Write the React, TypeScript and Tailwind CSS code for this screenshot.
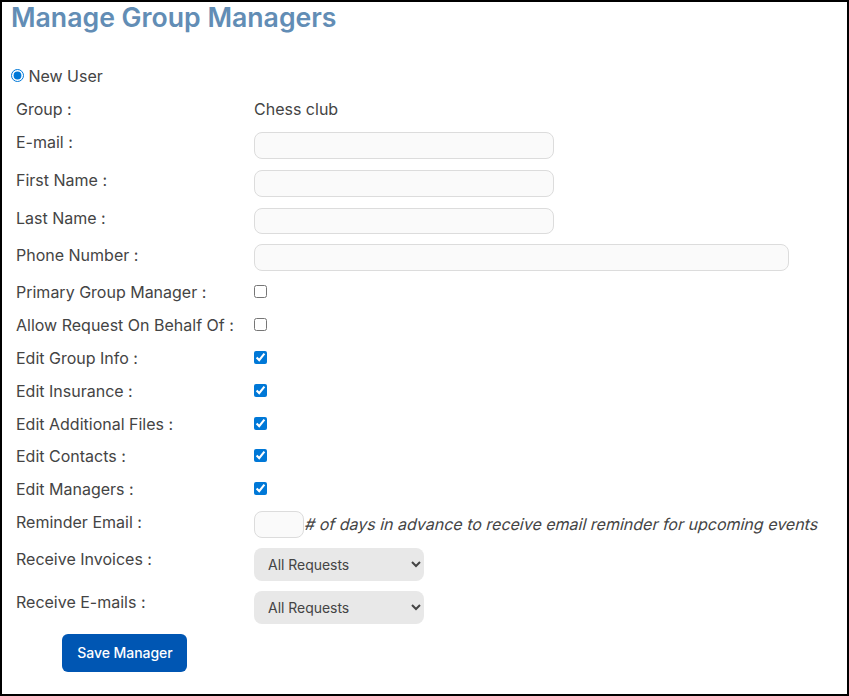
import { useState } from "react";

const textFields = [
  { name: "email", label: "E-mail :", row: "h-[38px]", size: "mt-[2px] h-[27px] w-[300px]" },
  { name: "firstName", label: "First Name :", row: "h-[38px]", size: "mt-[2px] h-[27px] w-[300px]" },
  { name: "lastName", label: "Last Name :", row: "h-[37px]", size: "mt-[2px] h-[26px] w-[300px]" },
  { name: "phone", label: "Phone Number :", row: "h-[37px]", size: "mt-px h-[27px] w-[535px]" },
];

const permissions = [
  { name: "primary", label: "Primary Group Manager :", row: "h-[33px]" },
  { name: "behalf", label: "Allow Request On Behalf Of :", row: "h-[33px]" },
  { name: "groupInfo", label: "Edit Group Info :", row: "h-[33px]" },
  { name: "insurance", label: "Edit Insurance :", row: "h-[33px]" },
  { name: "files", label: "Edit Additional Files :", row: "h-[32px]" },
  { name: "contacts", label: "Edit Contacts :", row: "h-[33px]" },
  { name: "managers", label: "Edit Managers :", row: "h-[33px]" },
];

const labelStyle = "w-[238px] shrink-0 leading-6";
const inputStyle = "rounded-lg border border-[#dcdcdc] bg-[#fafafa] px-2 focus:outline-none";
const selectStyle = "mt-px h-[33px] w-[170px] rounded-lg bg-[#e8e8e8] pl-[10px] text-sm tracking-[-0.03px]";

export default function App() {
  const [info, setInfo] = useState<Record<string, string>>({});
  const [checked, setChecked] = useState<Record<string, boolean>>({
    groupInfo: true,
    insurance: true,
    files: true,
    contacts: true,
    managers: true,
  });

  const handleInput = (
    e: React.ChangeEvent<HTMLInputElement> | React.ChangeEvent<HTMLSelectElement>
  ) => {
    const { name, value } = e.target;
    setInfo({ ...info, [name]: value });
  };

  const handleCheck = (e: React.ChangeEvent<HTMLInputElement>) => {
    setChecked({ ...checked, [e.target.name]: e.target.checked });
  };

  return (
    <div className="h-[696px] w-[849px] overflow-hidden border-2 border-black bg-white pl-[9px] font-['Inter',sans-serif] text-base text-[#444444]">
      <h1 className="h-[62px] text-[26.65px] leading-[30px] font-semibold text-[#628db5]">
        Manage Group Managers
      </h1>
      <label className="flex h-[31px] items-start">
        <input
          type="radio"
          defaultChecked
          className="mt-[5px] mr-[4.4px] h-[13px] w-[13px] accent-[#0078d7]"
        />
        <span className="leading-6">New User</span>
      </label>
      <div className="pl-[5px]">
        <div className="flex h-[35px] items-start pt-[2px]">
          <p className={labelStyle}>Group :</p>
          <p className="leading-6">Chess club</p>
        </div>
        {textFields.map((item) => (
          <div key={item.name} className={`flex items-start ${item.row}`}>
            <label className={labelStyle}>{item.label}</label>
            <input
              className={`${inputStyle} ${item.size}`}
              name={item.name}
              value={info[item.name] ?? ""}
              onChange={handleInput}
              type="text"
            />
          </div>
        ))}
        {permissions.map((item) => (
          <div key={item.name} className={`flex items-start ${item.row}`}>
            <label className={labelStyle}>{item.label}</label>
            <input
              className="mt-[5px] h-[13px] w-[13px] accent-[#0078d7]"
              name={item.name}
              checked={!!checked[item.name]}
              onChange={handleCheck}
              type="checkbox"
            />
          </div>
        ))}
        <div className="flex h-[37px] items-start">
          <label className={labelStyle}>Reminder Email :</label>
          <input
            className={`mt-px h-[27px] w-[50px] ${inputStyle}`}
            name="days"
            value={info.days ?? ""}
            onChange={handleInput}
            type="text"
          />
          <span className="mt-[2px] origin-[0_75%] -skew-x-[14deg] leading-6 whitespace-nowrap">
            # of days in advance to receive email reminder for upcoming events
          </span>
        </div>
        <div className="flex h-[43px] items-start">
          <label className={labelStyle}>Receive Invoices :</label>
          <select
            className={selectStyle}
            name="invoices"
            value={info.invoices}
            onChange={handleInput}
          >
            <option>All Requests</option>
          </select>
        </div>
        <div className="flex h-[44px] items-start">
          <label className={labelStyle}>Receive E-mails :</label>
          <select
            className={selectStyle}
            name="emails"
            value={info.emails}
            onChange={handleInput}
          >
            <option>All Requests</option>
          </select>
        </div>
        <button className="ml-[46px] h-[38px] w-[125px] rounded-md bg-[#0056b3] pl-px text-sm font-medium tracking-[-0.05px] text-white">
          Save Manager
        </button>
      </div>
    </div>
  );
}
